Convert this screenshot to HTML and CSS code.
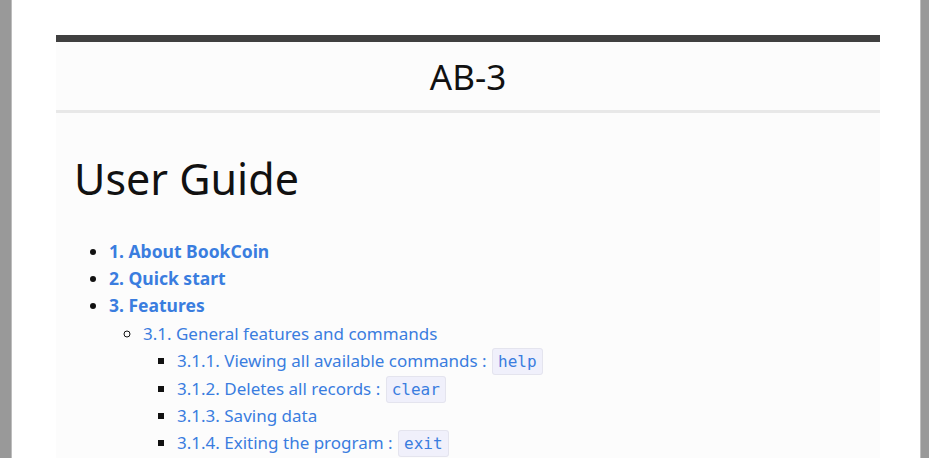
FILE: index.html
```html
<!DOCTYPE html>
<html lang="en">
<head>
<meta charset="utf-8">
<title>User Guide - AB-3</title>
<link rel="stylesheet" href="styles.css">
</head>
<body>
<div class="frame">
  <div class="page">
    <div class="sheet">
      <header class="site-header">
        <div class="site-title">AB-3</div>
      </header>
      <main class="content">
        <h1 class="title">User Guide</h1>
        <ul class="toc">
          <li><a class="toc-main" href="#about">1. About BookCoin</a></li>
          <li><a class="toc-main" href="#quick-start">2. Quick start</a></li>
          <li><a class="toc-main" href="#features">3. Features</a>
            <ul class="toc-sub">
              <li><a href="#general">3.1. General features and commands</a>
                <ul class="toc-subsub">
                  <li><a href="#help">3.1.1. Viewing all available commands : <code>help</code></a></li>
                  <li><a href="#clear">3.1.2. Deletes all records : <code>clear</code></a></li>
                  <li><a href="#save">3.1.3. Saving data</a></li>
                  <li><a href="#exit">3.1.4. Exiting the program : <code>exit</code></a></li>
                </ul>
              </li>
            </ul>
          </li>
        </ul>
      </main>
    </div>
  </div>
</div>
</body>
</html>
```

FILE: styles.css
```css
html, body {
  margin: 0;
  padding: 0;
  background: #ffffff;
}

body {
  font-family: "Noto Sans", "Open Sans", sans-serif;
  color: #111111;
  height: 458px;
  overflow: hidden;
}

.frame {
  height: 100%;
  border-left: 11px solid #999999;
  border-right: 8px solid #999999;
}

.page {
  height: 100%;
  border-left: 1px solid #bdbdbd;
  border-right: 1px solid #bdbdbd;
  padding: 35px 40px 0 44px;
  box-sizing: border-box;
}

.sheet {
  background: #fcfcfc;
  height: 100%;
}

.site-header {
  border-top: 7px solid #404040;
  border-bottom: 3px solid #e8e8e8;
  height: 68px;
  display: flex;
  align-items: center;
  justify-content: center;
}

.site-title {
  font-size: 35px;
  line-height: 1;
  color: #111111;
}

.content {
  padding: 40px 20px 0 18px;
}

.title {
  margin: 0 0 33px 0;
  font-size: 43px;
  font-weight: 400;
  line-height: 1.2;
}

.toc {
  margin: 0;
  padding-left: 35px;
  font-size: 17px;
  line-height: 27.4px;
  list-style: disc;
}

.toc ul {
  margin: 0;
  padding-left: 34px;
}

.toc-sub {
  list-style: circle;
}

.toc-subsub {
  list-style: square;
}

.toc a {
  color: #3a7ddf;
  text-decoration: none;
}

.toc a.toc-main {
  font-weight: 700;
  font-size: 17.5px;
}

.toc code {
  font-family: "DejaVu Sans Mono", "Liberation Mono", monospace;
  font-size: 16px;
  line-height: 1;
  background: #f0f0fb;
  border: 1px solid #e4e4ee;
  border-radius: 3px;
  padding: 3px 5px;
  margin-left: 1px;
  color: #3a7ddf;
}
```
